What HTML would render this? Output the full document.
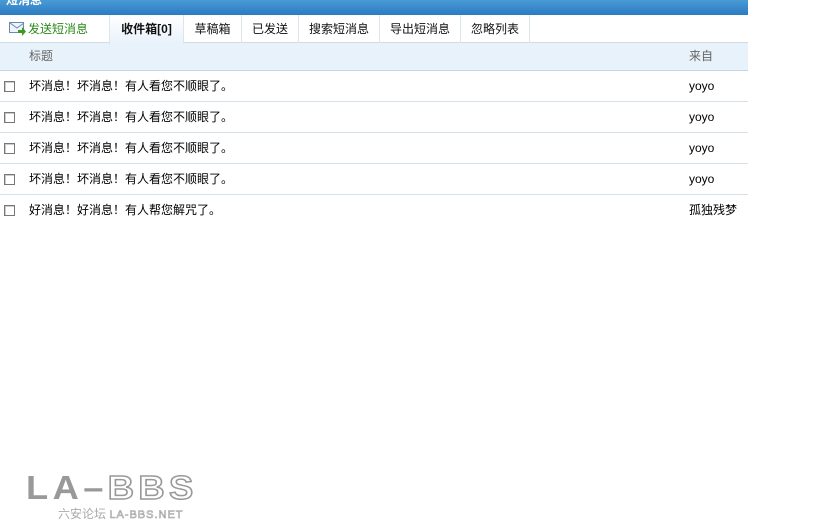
<!DOCTYPE html>
<html><head><meta charset="utf-8"><style>
*{margin:0;padding:0;box-sizing:border-box}
body{width:840px;height:525px;background:#fff;font-family:"Liberation Sans","SimSun","Noto Sans CJK SC",sans-serif;font-size:12px;color:#000;position:relative;overflow:hidden}
.hdr{position:absolute;left:0;top:0;width:748px;height:15px;background:linear-gradient(#4a9ad6,#2a7bc2);color:#fff;font-weight:bold;font-size:12px;overflow:hidden}
.hdr span{position:absolute;left:6px;top:-7px;line-height:14px}
.tabs{position:absolute;left:0;top:15px;width:748px;height:28px;border-bottom:1px solid #cfdbe6}
.tab{position:absolute;top:0;height:28px;line-height:28px;text-align:center;border-right:1px solid #dde5ec;font-size:12px;color:#111}
.act{background:linear-gradient(#fff,#e8f2fb);font-weight:bold;height:29px;border-left:1px solid #dde5ec;z-index:2}
.th{position:absolute;left:0;top:43px;width:748px;height:28px;background:#e8f2fb;border-bottom:1px solid #c8d6e2;color:#666;line-height:27px}
.row{position:absolute;left:0;width:748px;height:31px;border-bottom:1px solid #d6e0e8;line-height:30px}
.row.last{border-bottom:none}
.cb{position:absolute;left:4px;top:10px;width:11px;height:11px;border:1px solid #777;background:#fff;box-shadow:inset 1px 1px 0 #ccc}
.t{position:absolute;left:29px}
.f{position:absolute;left:689px}
.env{position:absolute;left:9px;top:7px}
.wm{position:absolute;left:26px;top:469px;font-size:33px;font-weight:bold;color:#999;letter-spacing:4px;font-family:"Liberation Sans",sans-serif;transform:scaleX(1.1);transform-origin:left}
.wm span{color:#fff;-webkit-text-stroke:1.5px #999}
.wm2{position:absolute;left:58px;top:505px;font-size:12px;color:#aaa;white-space:nowrap}
</style></head><body>
<div class="hdr"><span>短消息</span></div>
<div class="tabs">
<svg class="env" width="18" height="14" viewBox="0 0 18 14"><rect x="0.5" y="0.5" width="14" height="10" fill="#eef4fa" stroke="#6a8bb0"/><path d="M1 1l7 5 7-5" fill="none" stroke="#6a8bb0"/><path d="M9 8h4v-3l4 4.5-4 4.5v-3h-4z" fill="#3c9a22"/></svg>
<div class="tab" style="left:0;width:110px;color:#2a8a1a;border-right:none;text-align:left;padding-left:28px">发送短消息</div>
<div class="tab act" style="left:109px;width:75px">收件箱[0]</div>
<div class="tab" style="left:184px;width:58px">草稿箱</div>
<div class="tab" style="left:242px;width:57px">已发送</div>
<div class="tab" style="left:299px;width:81px">搜索短消息</div>
<div class="tab" style="left:380px;width:81px">导出短消息</div>
<div class="tab" style="left:461px;width:69px">忽略列表</div>
</div>
<div class="th"><span style="position:absolute;left:29px">标题</span><span style="position:absolute;left:689px">来自</span></div>
<div class="row" style="top:71px"><i class="cb"></i><span class="t">坏消息！坏消息！有人看您不顺眼了。</span><span class="f">yoyo</span></div>
<div class="row" style="top:102px"><i class="cb"></i><span class="t">坏消息！坏消息！有人看您不顺眼了。</span><span class="f">yoyo</span></div>
<div class="row" style="top:133px"><i class="cb"></i><span class="t">坏消息！坏消息！有人看您不顺眼了。</span><span class="f">yoyo</span></div>
<div class="row" style="top:164px"><i class="cb"></i><span class="t">坏消息！坏消息！有人看您不顺眼了。</span><span class="f">yoyo</span></div>
<div class="row last" style="top:195px"><i class="cb"></i><span class="t">好消息！好消息！有人帮您解咒了。</span><span class="f">孤独残梦</span></div>
<div class="wm">LA–<span>BBS</span></div>
<div class="wm2">六安论坛 <span style="font-size:11px;color:#fff;-webkit-text-stroke:0.6px #999;letter-spacing:1px">LA-BBS.NET</span></div>
</body></html>
